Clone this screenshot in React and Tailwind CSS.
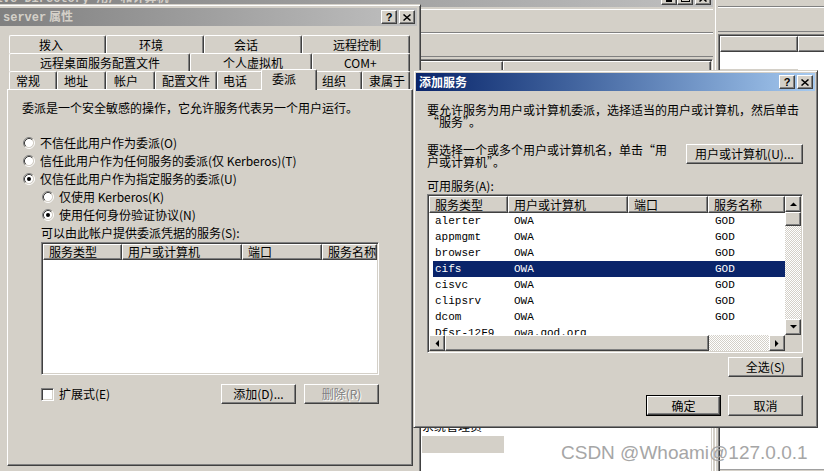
import React from "react";

const raised =
  "border border-t-[#d4d0c8] border-l-[#d4d0c8] border-r-[#404040] border-b-[#404040] shadow-[inset_1px_1px_#ffffff,inset_-1px_-1px_#808080]";
const btnBevel =
  "border border-t-white border-l-white border-r-[#404040] border-b-[#404040] shadow-[inset_-1px_-1px_#808080] bg-[#d4d0c8]";
const sunken =
  "border border-t-[#808080] border-l-[#808080] border-r-white border-b-white shadow-[inset_1px_1px_#404040,inset_-1px_-1px_#d4d0c8]";
const dither =
  "bg-[image:repeating-conic-gradient(#ffffff_0%_25%,#d4d0c8_0%_50%)] bg-[length:2px_2px]";
const mono = "font-['Liberation_Mono','Noto_Sans_CJK_SC',monospace]";

// caption button glyphs
function CloseGlyph() {
  return (
    <svg width="8" height="7" viewBox="0 0 8 7">
      <path d="M0.5 0.5L7.5 6.5M7.5 0.5L0.5 6.5" stroke="#000" strokeWidth="1.5" />
    </svg>
  );
}

function HelpGlyph() {
  return (
    <span className="text-[11px] leading-none font-bold font-['Liberation_Sans',sans-serif] text-black">
      ?
    </span>
  );
}

function MinGlyph() {
  return (
    <svg width="8" height="8" viewBox="0 0 8 8">
      <rect x="1" y="6" width="6" height="2" fill="#000" />
    </svg>
  );
}

function MaxGlyph() {
  return (
    <svg width="9" height="8" viewBox="0 0 9 8">
      <rect x="0.5" y="0.5" width="8" height="7" fill="none" stroke="#000" />
      <rect x="0" y="0" width="9" height="2" fill="#000" />
    </svg>
  );
}

function CapButton({ children, className = "" }) {
  return (
    <div className={`w-[16px] h-[14px] flex items-center justify-center ${btnBevel} ${className}`}>
      {children}
    </div>
  );
}

function TitleBar({ active, children, buttons }) {
  return (
    <div
      className={`h-[18px] shrink-0 flex items-center pr-[2px] ${
        active
          ? "bg-linear-to-r from-[#0a246a] to-[#a6caf0] text-white"
          : "bg-linear-to-r from-[#808080] to-[#c0c0c0] text-[#d4d0c8]"
      }`}
    >
      <div className="flex-1 min-w-0 pl-[3px] font-bold whitespace-nowrap">{children}</div>
      <div className="flex items-center">{buttons}</div>
    </div>
  );
}

function Button({ children, className = "", disabled, isDefault }) {
  const inner = (
    <div
      className={`h-full w-full flex items-center justify-center whitespace-nowrap ${btnBevel} ${
        disabled ? "text-[#808080] [text-shadow:1px_1px_#ffffff]" : ""
      }`}
    >
      {children}
    </div>
  );
  if (isDefault) return <div className={`border border-black ${className}`}>{inner}</div>;
  return <div className={className}>{inner}</div>;
}

function Radio({ checked }) {
  return (
    <svg width="12" height="12" viewBox="0 0 12 12" className="shrink-0">
      <circle cx="6" cy="6" r="4.2" fill="#fff" />
      <path d="M2.11 9.89A5.5 5.5 0 0 1 9.89 2.11" fill="none" stroke="#808080" />
      <path d="M9.89 2.11A5.5 5.5 0 0 1 2.11 9.89" fill="none" stroke="#fff" />
      <path d="M2.82 9.18A4.5 4.5 0 0 1 9.18 2.82" fill="none" stroke="#404040" />
      <path d="M9.18 2.82A4.5 4.5 0 0 1 2.82 9.18" fill="none" stroke="#d4d0c8" />
      {checked && <circle cx="6" cy="6" r="2" fill="#000" />}
    </svg>
  );
}

function RadioRow({ checked, indent, children }) {
  return (
    <div className={`h-[18px] flex items-center gap-[5px] ${indent ? "ml-[20px]" : "ml-[1px]"}`}>
      <Radio checked={checked} />
      <span className="whitespace-nowrap">{children}</span>
    </div>
  );
}

function Arrow({ dir }) {
  const pts = {
    up: "0,4 3.5,0.5 7,4",
    down: "0,0 3.5,3.5 7,0",
    left: "4,0 0.5,3.5 4,7",
    right: "0,0 3.5,3.5 0,7",
  };
  const w = dir === "up" || dir === "down" ? 7 : 4;
  const h = dir === "up" || dir === "down" ? 4 : 7;
  return (
    <svg width={w} height={h} viewBox={`0 0 ${w} ${h}`}>
      <polygon points={pts[dir]} fill="#000" />
    </svg>
  );
}

function ScrollBtn({ dir }) {
  return (
    <div className={`w-[16px] h-[16px] shrink-0 flex items-center justify-center ${btnBevel}`}>
      <Arrow dir={dir} />
    </div>
  );
}

function HeaderCell({ children, className = "" }) {
  return (
    <div className={`h-full shrink-0 flex items-center pl-[5px] whitespace-nowrap overflow-hidden ${btnBevel} ${className}`}>
      {children}
    </div>
  );
}

const tabRows = [
  [
    { label: "拨入", cls: "w-[97px] pl-[29px]" },
    { label: "环境", cls: "w-[98px] pl-[32px]" },
    { label: "会话", cls: "w-[98px] pl-[29px]" },
    { label: "远程控制", cls: "w-[108px] pl-[30px]" },
  ],
  [
    { label: "远程桌面服务配置文件", cls: "w-[181px] pl-[30px]" },
    { label: "个人虚拟机", cls: "w-[122px] pl-[32px]" },
    { label: "COM+", cls: "w-[98px] pl-[31px]" },
  ],
  [
    { label: "常规", cls: "w-[48px] pl-[6px]" },
    { label: "地址", cls: "w-[49px] pl-[6px]" },
    { label: "帐户", cls: "w-[49px] pl-[7px]" },
    { label: "配置文件", cls: "w-[62px] pl-[6px]" },
    { label: "电话", cls: "w-[46px] pl-[5px]" },
    { label: "委派", cls: "w-[56px] pl-[10px]", selected: true },
    { label: "组织", cls: "w-[47px] pl-[6px]" },
    { label: "隶属于", cls: "w-[48px] pl-[6px]" },
  ],
];

function Tab({ label, cls, selected }) {
  return (
    <div
      className={`${cls} shrink-0 flex items-center whitespace-nowrap border-t border-l border-r border-t-white border-l-white border-r-[#404040] shadow-[inset_-1px_0_#808080] rounded-tl-[2px] rounded-tr-[2px] ${
        selected ? "relative z-10 -mx-[2px] -mt-[2px] h-[21px] pb-[3px] bg-[#d4d0c8]" : "h-full"
      }`}
    >
      {label}
    </div>
  );
}

const services = [
  ["alerter", "OWA", "", "GOD"],
  ["appmgmt", "OWA", "", "GOD"],
  ["browser", "OWA", "", "GOD"],
  ["cifs", "OWA", "", "GOD"],
  ["cisvc", "OWA", "", "GOD"],
  ["clipsrv", "OWA", "", "GOD"],
  ["dcom", "OWA", "", "GOD"],
  ["Dfsr-12F9", "owa.god.org", "", ""],
];

function ServiceList() {
  return (
    <div className={`mt-[2px] w-[376px] h-[159px] shrink-0 bg-white p-[1px] flex flex-col ${sunken}`}>
      <div className="flex h-[139px]">
        <div className="w-[356px] overflow-hidden flex flex-col">
          <div className="flex h-[17px] shrink-0">
            <HeaderCell className="w-[79px]">服务类型</HeaderCell>
            <HeaderCell className="w-[120px]">用户或计算机</HeaderCell>
            <HeaderCell className="w-[80px]">端口</HeaderCell>
            <HeaderCell className="flex-1">服务名称</HeaderCell>
          </div>
          {services.map((row, i) => (
            <div
              key={row[0]}
              className={`ml-[4px] h-[16px] shrink-0 flex items-center text-[11px] font-['Liberation_Mono',monospace] ${
                i === 3 ? "bg-[#0a246a] text-white" : "text-black"
              }`}
            >
              <div className="w-[75px] pl-[2px]">{row[0]}</div>
              <div className="w-[120px] pl-[6px]">{row[1]}</div>
              <div className="w-[80px]">{row[2]}</div>
              <div className="flex-1 pl-[7px]">{row[3]}</div>
            </div>
          ))}
        </div>
        <div className="w-[16px] flex flex-col">
          <ScrollBtn dir="up" />
          <div className={`h-[14px] shrink-0 ${btnBevel}`} />
          <div className={`flex-1 ${dither}`} />
          <ScrollBtn dir="down" />
        </div>
      </div>
      <div className="flex h-[16px]">
        <ScrollBtn dir="left" />
        <div className={`w-[264px] shrink-0 ${btnBevel}`} />
        <div className={`flex-1 ${dither}`} />
        <ScrollBtn dir="right" />
        <div className="w-[16px] shrink-0 bg-[#d4d0c8]" />
      </div>
    </div>
  );
}

function DelegationPanel() {
  return (
    <div className="ml-[7px] w-[406px] h-[377px] shrink-0 border border-t-white border-l-white border-r-[#404040] border-b-[#404040] shadow-[inset_-1px_-1px_#808080] pl-[14px] pt-[10px] flex flex-col">
      <div className="h-[16px] flex items-center whitespace-nowrap">
        委派是一个安全敏感的操作，它允许服务代表另一个用户运行。
      </div>
      <div className="mt-[18px] flex flex-col">
        <RadioRow>不信任此用户作为委派(O)</RadioRow>
        <RadioRow>信任此用户作为任何服务的委派(仅 Kerberos)(T)</RadioRow>
        <RadioRow checked>仅信任此用户作为指定服务的委派(U)</RadioRow>
        <RadioRow indent>仅使用 Kerberos(K)</RadioRow>
        <RadioRow indent checked>
          使用任何身份验证协议(N)
        </RadioRow>
        <div className="h-[18px] ml-[19px] flex items-center whitespace-nowrap">
          可以由此帐户提供委派凭据的服务(S):
        </div>
      </div>
      <div className={`ml-[19px] w-[338px] h-[133px] shrink-0 bg-white p-[1px] ${sunken}`}>
        <div className="flex h-[16px]">
          <HeaderCell className="w-[79px]">服务类型</HeaderCell>
          <HeaderCell className="w-[120px]">用户或计算机</HeaderCell>
          <HeaderCell className="w-[80px]">端口</HeaderCell>
          <HeaderCell className="flex-1">服务名称</HeaderCell>
        </div>
      </div>
      <div className="mt-[9px] ml-[19px] w-[338px] h-[20px] flex items-center">
        <div className={`w-[13px] h-[13px] bg-white ${sunken}`} />
        <span className="ml-[5px]">扩展式(E)</span>
        <div className="ml-auto flex gap-[8px]">
          <Button className="w-[75px] h-[20px]">添加(D)...</Button>
          <Button disabled className="w-[75px] h-[20px]">
            删除(R)
          </Button>
        </div>
      </div>
    </div>
  );
}

export default function App() {
  return (
    <div className="relative w-[824px] h-[471px] overflow-hidden bg-white text-black text-[12px] leading-[16px] font-['Noto_Sans_CJK_SC','Noto_Sans',sans-serif]">
      {/* Active Directory window behind */}
      <div className={`absolute left-[-4px] top-[-15px] w-[721px] h-[500px] bg-[#d4d0c8] p-[3px] flex flex-col ${raised}`}>
        <TitleBar
          buttons={
            <>
              <CapButton>
                <MinGlyph />
              </CapButton>
              <CapButton>
                <MaxGlyph />
              </CapButton>
              <CapButton className="ml-[2px]">
                <CloseGlyph />
              </CapButton>
            </>
          }
        >
          <span className={`${mono} -ml-[29px]`}>Active Directory 用户和计算机</span>
        </TitleBar>
        <div className="mt-[2px] h-[24px] shrink-0 border-t border-t-white border-b border-b-[#808080]" />
        <div className="h-[24px] shrink-0 border-t border-t-white border-b border-b-[#808080]" />
        <div className={`mt-[2px] flex-1 bg-white p-[1px] flex flex-col ${sunken}`}>
          <div className="flex h-[16px] shrink-0">
            <HeaderCell className="w-[501px]" />
            <HeaderCell className="flex-1" />
          </div>
          <div className="h-[341px] shrink-0" />
          <div className="h-[16px] shrink-0 pl-[420px] flex items-center whitespace-nowrap">系统管理员</div>
          <div className="mt-[2px] ml-[420px] w-[82px] h-[17px] bg-[#d4d0c8]" />
        </div>
      </div>

      {/* window at the right edge */}
      <div className={`absolute left-[714px] top-[-22px] w-[130px] h-[510px] bg-[#d4d0c8] p-[3px] flex flex-col ${raised}`}>
        <TitleBar />
        <div className="h-[7px] shrink-0 border-b border-b-[#808080]" />
        <div className="h-[25px] shrink-0 border-t border-t-white border-b border-b-[#808080]" />
        <div className={`mt-[2px] bg-white p-[1px] flex flex-col ${sunken}`}>
          <div className="flex h-[16px] shrink-0">
            <HeaderCell className="w-[78px]" />
            <HeaderCell className="flex-1" />
          </div>
          <div className="h-[17px] shrink-0" />
          <div className="w-[78px] h-[16px] shrink-0 bg-[#d4d0c8]" />
          <div className="h-[384px] shrink-0" />
          <div className="h-[30px] shrink-0 border-t border-t-[#a0a0a0] bg-[#d4d0c8]" />
        </div>
      </div>

      {/* server 属性 */}
      <div className={`absolute left-[-4px] top-[4px] w-[425px] h-[490px] bg-[#d4d0c8] p-[3px] flex flex-col ${raised}`}>
        <TitleBar
          buttons={
            <>
              <CapButton>
                <HelpGlyph />
              </CapButton>
              <CapButton className="ml-[2px]">
                <CloseGlyph />
              </CapButton>
            </>
          }
        >
          <span className={mono}>server</span> 属性
        </TitleBar>
        <div className="mt-[9px] ml-[9px] w-[401px] flex flex-col">
          {tabRows.map((row, i) => (
            <div key={i} className="flex h-[18px]">
              {row.map((t) => (
                <Tab key={t.label} {...t} />
              ))}
            </div>
          ))}
        </div>
        <DelegationPanel />
      </div>

      {/* 添加服务 */}
      <div className={`absolute left-[413px] top-[70px] w-[405px] h-[358px] bg-[#d4d0c8] p-[2px] flex flex-col ${raised}`}>
        <TitleBar
          active
          buttons={
            <>
              <CapButton>
                <HelpGlyph />
              </CapButton>
              <CapButton className="ml-[2px]">
                <CloseGlyph />
              </CapButton>
            </>
          }
        >
          添加服务
        </TitleBar>
        <div className="flex-1 flex flex-col pl-[11px] pr-[12px]">
          <p className="mt-[13px] leading-[12px] whitespace-nowrap">
            要允许服务为用户或计算机委派，选择适当的用户或计算机，然后单击
            <br />
            “服务”。
          </p>
          <div className="mt-[16px] flex items-start justify-between">
            <p className="leading-[12px] whitespace-nowrap">
              要选择一个或多个用户或计算机名，单击“用
              <br />
              户或计算机”。
            </p>
            <Button className="w-[117px] h-[20px]">用户或计算机(U)...</Button>
          </div>
          <div className="mt-[12px] leading-[12px]">可用服务(A):</div>
          <ServiceList />
          <Button className="self-end mt-[4px] w-[75px] h-[20px]">全选(S)</Button>
          <div className="mt-[18px] flex justify-end gap-[7px]">
            <Button isDefault className="w-[75px] h-[21px]">
              确定
            </Button>
            <Button className="w-[75px] h-[21px]">取消</Button>
          </div>
        </div>
      </div>

      {/* watermark */}
      <div className="absolute left-[561px] top-[443px] text-[19px] leading-[20px] font-['Liberation_Sans',sans-serif] text-[#a6a6a6] whitespace-nowrap">
        CSDN @Whoami@127.0.0.1
      </div>
    </div>
  );
}
